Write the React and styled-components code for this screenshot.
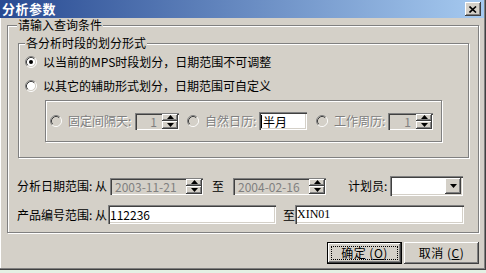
import React from 'react';
import styled, { createGlobalStyle } from 'styled-components';

const GlobalStyle = createGlobalStyle`
  html, body {
    margin: 0;
    padding: 0;
    background: #e4f1e4;
  }
  body {
    font-family: "Noto Sans CJK SC", "Liberation Sans", sans-serif;
    font-size: 12px;
    color: #000;
  }
`;

const sunken = `
  box-shadow: inset 1px 1px #808080, inset 2px 2px #404040,
    inset -1px -1px #ffffff, inset -2px -2px #d4d0c8;
`;

const raised = `
  box-shadow: inset -1px -1px #404040, inset 1px 1px #ffffff,
    inset -2px -2px #808080, inset 2px 2px #d4d0c8;
`;

const Window = styled.div`
  width: 486px;
  height: 270px;
  box-sizing: border-box;
  background: #d4d0c8;
  box-shadow: inset -1px -1px #404040, inset -2px -2px #808080, inset 1px 0 #ffffff;
  display: flex;
  flex-direction: column;
`;

const TitleBar = styled.div`
  height: 18px;
  margin-right: 2px;
  box-sizing: border-box;
  padding: 0 3px 0 2px;
  background: linear-gradient(to right, #284a92, #a6caf0);
  display: flex;
  align-items: center;
  justify-content: space-between;
`;

const Title = styled.span`
  color: #fff;
  font-weight: bold;
  font-size: 13px;
  line-height: 14px;
  letter-spacing: 0.5px;
`;

const CloseButton = styled.div`
  width: 16px;
  height: 14px;
  background: #d4d0c8;
  ${raised}
  display: flex;
  align-items: center;
  justify-content: center;
`;

const Body = styled.div`
  flex: 1;
  padding: 7px 7px 0 7px;
  display: flex;
  flex-direction: column;
`;

const Group = styled.div`
  position: relative;
  box-sizing: border-box;
  width: ${p => p.$w}px;
  height: ${p => p.$h}px;
  margin: ${p => p.$m || '0'};
  padding: ${p => p.$p || '0'};
  border: 1px solid #808080;
  box-shadow: inset 1px 1px #ffffff, 1px 1px #ffffff;
  display: flex;
  flex-direction: ${p => (p.$row ? 'row' : 'column')};
  align-items: ${p => (p.$row ? 'center' : 'stretch')};
`;

const Legend = styled.span`
  position: absolute;
  top: -8px;
  left: ${p => p.$left}px;
  padding: 0 1px;
  background: #d4d0c8;
  line-height: 14px;
  white-space: nowrap;
`;

const OptionRow = styled.div`
  display: flex;
  align-items: center;
  height: 16px;
  gap: 6px;
  margin-top: ${p => p.$mt || 0}px;
`;

const Text = styled.span`
  flex: none;
  width: ${p => (p.$w ? `${p.$w}px` : 'auto')};
  margin-left: ${p => p.$ml || 0}px;
  color: ${p => (p.$disabled ? '#808080' : '#000')};
  text-shadow: ${p => (p.$disabled ? '1px 1px #ffffff' : 'none')};
  white-space: nowrap;
  line-height: 14px;
`;

const RadioSvg = styled.svg`
  flex: none;
  display: block;
  margin-left: ${p => p.$ml || 0}px;
`;

const Field = styled.div`
  flex: none;
  box-sizing: border-box;
  width: ${p => p.$w}px;
  height: ${p => p.$h}px;
  margin-left: ${p => p.$ml || 0}px;
  background: ${p => (p.$disabled ? '#d4d0c8' : '#ffffff')};
  ${sunken}
  display: flex;
  align-items: center;
`;

const FieldText = styled.span`
  flex: 1;
  padding: 0 ${p => p.$pr || 3}px 0 ${p => p.$pl || 3}px;
  color: ${p => (p.$disabled ? '#808080' : '#000')};
  font-family: ${p => (p.$serif ? '"Liberation Serif", serif' : 'inherit')};
  line-height: 13px;
  white-space: nowrap;
  display: flex;
  align-items: center;
  justify-content: ${p => (p.$right ? 'flex-end' : 'flex-start')};
`;

const Caret = styled.span`
  width: 1px;
  height: 13px;
  background: #000;
  margin-right: 1px;
`;

const SpinStack = styled.div`
  flex: none;
  width: 16px;
  align-self: stretch;
  margin: 1px 1px 1px 0;
  display: flex;
  flex-direction: column;
`;

const SpinButton = styled.div`
  flex: 1;
  background: #d4d0c8;
  box-shadow: inset -1px -1px #404040, inset 1px 1px #ffffff, inset -2px -2px #808080;
  display: flex;
  align-items: center;
  justify-content: center;
`;

const DropButton = styled.div`
  flex: none;
  width: 16px;
  height: 16px;
  margin: 0 2px 0 auto;
  background: #d4d0c8;
  ${raised}
  display: flex;
  align-items: center;
  justify-content: center;
`;

const FormRow = styled.div`
  display: flex;
  align-items: center;
  height: ${p => p.$h}px;
  margin-top: ${p => p.$mt}px;
`;

const ButtonBar = styled.div`
  display: flex;
  justify-content: flex-end;
  gap: 2px;
  margin-top: 9px;
`;

const DialogButton = styled.div`
  box-sizing: border-box;
  width: 75px;
  height: 22px;
  background: #d4d0c8;
  display: flex;
  align-items: stretch;
  justify-content: center;
  ${p =>
    p.$default
      ? `border: 1px solid #000;
         box-shadow: inset -1px -1px #404040, inset 1px 1px #ffffff, inset -2px -2px #808080;`
      : raised}
`;

const ButtonLabel = styled.span`
  flex: 1;
  margin: ${p => (p.$focus ? '3px' : '0')};
  border: ${p => (p.$focus ? '1px dotted #000' : 'none')};
  display: flex;
  align-items: center;
  justify-content: center;
  line-height: 14px;
  letter-spacing: 0.5px;
`;

const Radio = ({ checked, disabled, ml }) => (
  <RadioSvg width="12" height="12" viewBox="0 0 12 12" $ml={ml}>
    <circle cx="6" cy="6" r="4.5" fill={disabled ? '#d4d0c8' : '#ffffff'} />
    <path d="M2.11 9.89A5.5 5.5 0 0 1 9.89 2.11" stroke="#808080" fill="none" />
    <path d="M9.89 2.11A5.5 5.5 0 0 1 2.11 9.89" stroke="#ffffff" fill="none" />
    <path d="M2.82 9.18A4.5 4.5 0 0 1 9.18 2.82" stroke="#404040" fill="none" />
    <path d="M9.18 2.82A4.5 4.5 0 0 1 2.82 9.18" stroke="#d4d0c8" fill="none" />
    {checked && <circle cx="6" cy="6" r="2" fill="#000" />}
  </RadioSvg>
);

const Arrow = ({ down }) => (
  <svg width="7" height="4" viewBox="0 0 7 4">
    <path d={down ? 'M0 0H7L3.5 4Z' : 'M0 4H7L3.5 0Z'} fill="#000" />
  </svg>
);

const Spin = () => (
  <SpinStack>
    <SpinButton><Arrow /></SpinButton>
    <SpinButton><Arrow down /></SpinButton>
  </SpinStack>
);

const NumberSpin = ({ w, ml }) => (
  <Field $w={w} $h={17} $ml={ml} $disabled>
    <FieldText $right $pr={5} $disabled>1</FieldText>
    <Spin />
  </Field>
);

const DateSpin = ({ value, ml }) => (
  <Field $w={93} $h={17} $ml={ml} $disabled>
    <FieldText $pl={5} $disabled>{value}</FieldText>
    <Spin />
  </Field>
);

export default function App() {
  return (
    <>
      <GlobalStyle />
      <Window>
        <TitleBar>
          <Title>分析参数</Title>
          <CloseButton>
            <svg width="8" height="7" viewBox="0 0 8 7">
              <path d="M0.5 0.5L7 6.5M7 0.5L0.5 6.5" stroke="#000" strokeWidth="1.6" />
            </svg>
          </CloseButton>
        </TitleBar>
        <Body>
          <Group $w={472} $h={208} $p="17px 0 0 9px">
            <Legend $left={9}>请输入查询条件</Legend>
            <Group $w={451} $h={115} $m="0 0 0 1px" $p="10px 0 0 6px">
              <Legend $left={6}>各分析时段的划分形式</Legend>
              <OptionRow>
                <Radio checked />
                <Text>以当前的MPS时段划分，日期范围不可调整</Text>
              </OptionRow>
              <OptionRow $mt={8}>
                <Radio />
                <Text>以其它的辅助形式划分，日期范围可自定义</Text>
              </OptionRow>
              <Group $row $w={397} $h={42} $m="6px 0 0 20px" $p="0 0 0 4px">
                <Radio disabled />
                <Text $w={67} $ml={6} $disabled>固定间隔天:</Text>
                <NumberSpin w={44} />
                <Radio disabled ml={8} />
                <Text $w={54} $ml={6} $disabled>自然日历:</Text>
                <Field $w={48} $h={18}>
                  <FieldText $pl={2}><Caret />半月</FieldText>
                </Field>
                <Radio disabled ml={9} />
                <Text $w={54} $ml={6} $disabled>工作周历:</Text>
                <NumberSpin w={45} />
              </Group>
            </Group>
            <FormRow $h={20} $mt={18}>
              <Text $w={93}>分析日期范围: 从</Text>
              <DateSpin value="2003-11-21" />
              <Text $w={12} $ml={9}>至</Text>
              <DateSpin value="2004-02-16" ml={9} />
              <Text $w={42} $ml={22}>计划员:</Text>
              <Field $w={73} $h={20}>
                <DropButton><Arrow down /></DropButton>
              </Field>
            </FormRow>
            <FormRow $h={19} $mt={9}>
              <Text $w={91}>产品编号范围: 从</Text>
              <Field $w={168} $h={19}>
                <FieldText $pl={2}>112236</FieldText>
              </Field>
              <Text $w={12} $ml={7}>至</Text>
              <Field $w={169} $h={19}>
                <FieldText $pl={2} $serif>XIN01</FieldText>
              </Field>
            </FormRow>
          </Group>
          <ButtonBar>
            <DialogButton $default>
              <ButtonLabel $focus>确定 (<u>O</u>)</ButtonLabel>
            </DialogButton>
            <DialogButton>
              <ButtonLabel>取消 (<u>C</u>)</ButtonLabel>
            </DialogButton>
          </ButtonBar>
        </Body>
      </Window>
    </>
  );
}
